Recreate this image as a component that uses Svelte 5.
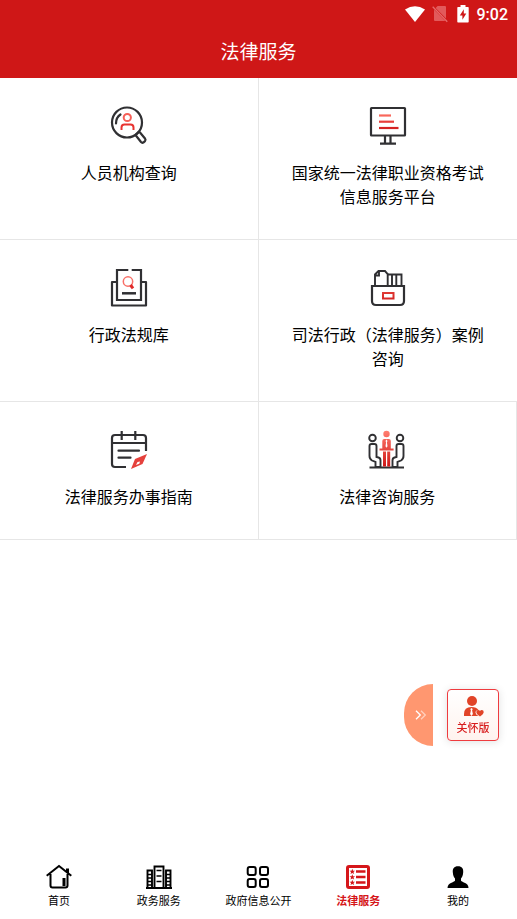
<script>
	// Entries of the service grid
	const services = [
		{ icon: "person", name: "人员机构查询" },
		{ icon: "exam", name: "国家统一法律职业资格考试信息服务平台" },
		{ icon: "law", name: "行政法规库" },
		{ icon: "cases", name: "司法行政（法律服务）案例咨询" },
		{ icon: "guide", name: "法律服务办事指南" },
		{ icon: "consult", name: "法律咨询服务" },
	];

	const tabs = [
		{ id: "home", name: "首页" },
		{ id: "affairs", name: "政务服务" },
		{ id: "open", name: "政府信息公开" },
		{ id: "legal", name: "法律服务" },
		{ id: "mine", name: "我的" },
	];

	let activeTab = $state("legal");
	let showCare = $state(true);
</script>

<div class="page">
	<header>
		<div class="status">
			<svg width="20" height="16" viewBox="0 0 20 16">
				<path d="M10 16 0 3.5Q10-3.2 20 3.5Z" fill="#fff" />
			</svg>
			<svg class="sim" width="16" height="18" viewBox="0 0 16 18">
				<path d="M5.6 1H13q1 0 1 1v11.4L3.6 3ZM2 4.6 13.4 16H3q-1 0-1-1Z" fill="#e25a5b" />
				<path d="m.7 1.7 14.6 15" stroke="#e66a6b" stroke-width="1.3" />
			</svg>
			<svg class="battery" width="12" height="18" viewBox="0 0 12 18">
				<path d="M3.5 0h5v2H11q.7 0 .7.7v14q0 .8-.7.8H1q-.7 0-.7-.8v-14Q.3 2 1 2h2.500Z" fill="#fff" />
				<path d="M6.8 4.300 2.800 10.500h2.600v4.300l3.900-6.300H6.800Z" fill="#cf1717" />
			</svg>
			<span>9:02</span>
		</div>
		<h1>法律服务</h1>
	</header>

	<main>
		{#each services as service}
			<button class="service">
				<svg class="serviceIcon" viewBox="0 0 40 40" fill="none" stroke="#303033" stroke-width="2.2">
					<defs>
						<linearGradient id="red-{service.icon}" gradientUnits="userSpaceOnUse" x1="18" y1="2" x2="22" y2="36">
							<stop offset="0" stop-color="#ff7c6e" />
							<stop offset="1" stop-color="#cf1717" />
						</linearGradient>
					</defs>
					{#if service.icon === "person"}
						<circle cx="18" cy="16.500" r="15" />
						<path d="M7 17.500q0-6 4.500-9" stroke-linecap="round" />
						<path d="m26.500 29 2.500-2.500q1-1 2 0l5 6q1 1.300 0 2.600l-1.400 1.200q-1.400 1-2.600-.3Z" stroke-linejoin="round" />
						<circle cx="18.300" cy="11.500" r="3.600" stroke="#f65f57" stroke-width="2" />
						<path d="M12.500 24v-2.500q0-3 3-3h6q3 0 3 3V24" stroke="#e8322f" stroke-width="2" />
					{:else if service.icon === "exam"}
						<rect x="3" y="2" width="34" height="27.500" rx=".5" />
						<path d="M17 30v7M22.500 30v7M12 37.700h16" />
						<path d="M11 9.500h12" stroke="#f9675b" />
						<path d="M11 15.700h15" stroke="#e83d3a" />
						<path d="M11 22h19.500" stroke="#d52222" />
					{:else if service.icon === "law"}
						<path d="M19.300 2H8v30h24V2h-9.300" />
						<path d="M7 14H3v23.500h34V14h-4" stroke-linejoin="round" />
						<path d="M13 25.300h14" stroke-width="2.500" />
						<circle cx="19" cy="13.500" r="4.700" stroke="#f87068" stroke-width="1.500" />
						<path d="m21.500 17 2.500 3.300" stroke="#e02a2a" stroke-width="3" />
					{:else if service.icon === "cases"}
						<path d="M4 18h32v15q0 4-4 4H8q-4 0-4-4Z" />
						<path d="M7 17.500V6.500L10.500 3H17l2.700 3V18M7 7.500h4V3" stroke-width="1.900" />
						<path d="M19.700 6.500h13.800V18M24 6.500V18M28.300 6.500V18" stroke-width="1.900" />
						<rect x="15" y="25" width="10.500" height="5.500" stroke="url(#red-cases)" stroke-width="2" />
					{:else if service.icon === "guide"}
						<path d="M17 37H6q-3 0-3-3V8q0-3 3-3h28q3 0 3 3v13" />
						<path d="M3 13h34M12.700 1v9M26.300 1v9" />
						<path d="M9.500 20.700H30M9.500 27.700h12" stroke-linecap="round" />
						<path d="M38 24 26 29 22 39l11.500-5Z" fill="#e5413c" stroke="none" />
						<path d="m27 35 1.500-3 2.500-.5-.7 2.300Z" fill="#fff" stroke="none" />
					{:else}
						<g stroke-width="1.900">
							<circle cx="5.500" cy="8" r="3.300" />
							<circle cx="33" cy="8" r="3.300" />
							<path d="M4.500 14h3q2 0 2 2v11l2 .5q2 .5 2 3V37h-5v-5L5 30.500Q2.500 29 2.500 26V16q0-2 2-2Z" />
							<path d="M34.500 14h-3q-2 0-2 2v11l-2 .5q-2 .5-2 3V37h5v-5l3.500-1.500q2.500-1.500 2.500-4.500V16q0-2-2-2Z" />
							<path d="M2.500 37.500H37" stroke-width="2" />
						</g>
						<g fill="url(#red-consult)" stroke="none">
							<circle cx="19.500" cy="4" r="3.200" />
							<path d="M17.300 9h4.500q2 0 2 2v7.500h2.800v2H12.500v-2h2.800V11q0-2 2-2ZM16 21.500h3v15h-3ZM20.200 21.500h3v15h-3Z" />
						</g>
						<path d="m19.500 9.500-1 1.500.6 1.300-.6 4 1 1.500 1-1.500-.6-4 .6-1.300Z" fill="#fff" stroke="none" />
					{/if}
				</svg>
				<span>{service.name}</span>
			</button>
		{/each}
	</main>

	<nav>
		{#each tabs as tab}
			<button class="tab" class:active={activeTab === tab.id} onclick={() => (activeTab = tab.id)}>
				<svg width="26" height="26" viewBox="0 0 26 26" fill="none" stroke="currentColor" stroke-width="2">
					{#if tab.id === "home"}
						<path d="M.7 11.700 13 2l12.300 9.700M4.500 10v11.500q0 2 2 2h13q2 0 2-2V10" />
						<path d="M21.500 9V4.500M18 14v8" stroke-width="3" />
					{:else if tab.id === "affairs"}
						<path d="M0 24h26" />
						<path d="M8.500 24V2.500h9V24M1.500 24V6.500H6V24M20 24V6.500h4.500V24" stroke-width="1.900" />
						<path d="M10.500 6.500h5M10.500 12h5M10.500 17.500h5M2 10.500h4M2 14h4M2 17.500h4M2 21h4M20 10.500h4M20 14h4M20 17.500h4M20 21h4" stroke-width="1.500" />
					{:else if tab.id === "open"}
						<rect x="2.700" y="3" width="8" height="8" rx="2" />
						<rect x="15" y="3" width="8" height="8" rx="2" />
						<rect x="2.700" y="15" width="8" height="8" rx="2" />
						<rect x="15" y="15" width="8" height="8" rx="2" />
					{:else if tab.id === "legal"}
						<rect x="2.500" y="2.500" width="21" height="21" rx="1.500" stroke-width="3" />
						<path d="M11 7.500h9.500M11 13h9.500M11 18.500h9.500" stroke-width="2.400" />
						{#each [7.5, 13, 18.5] as y}
							<path d="M7.300 {y - 2.7}l.8 1.900 2 .1-1.600 1.300.6 2-1.800-1.100-1.800 1.100.6-2-1.600-1.300 2-.1Z" fill="currentColor" stroke="none" />
						{/each}
					{:else}
						<path d="M13 2.300c4 0 5.500 2.500 5.200 6-.2 3.500-1.200 5-2.200 6.200v2.300c1 1.700 7.500 2 7.500 7.200h-21c0-5.200 6.500-5.500 7.500-7.200v-2.300C9 13.300 8 11.800 7.800 8.300c-.3-3.500 1.200-6 5.200-6Z" fill="currentColor" stroke="none" />
					{/if}
				</svg>
				<span>{tab.name}</span>
			</button>
		{/each}
	</nav>
</div>

<!-- Floating switch to the care edition -->
<div class="float">
	<button class="fold" aria-label="收起" onclick={() => (showCare = !showCare)}>
		<svg width="12" height="10" viewBox="0 0 12 10" fill="none" stroke-width="1.300">
			<path d="m1 .8 4.300 4.200L1 9.200" stroke="#fff" />
			<path d="m6 .8 4.300 4.200L6 9.200" stroke="#ffd0bd" />
		</svg>
	</button>
	{#if showCare}
		<button class="care">
			<svg width="22" height="22" viewBox="-2 0 22 22">
				<circle cx="8" cy="6" r="5" fill="#e14428" />
				<path d="M0 21v-2q0-7 7.500-7 5 0 7 3-3 0-3 2.500 0 2 3 3.500Z" fill="#e14428" />
				<path d="m7.500 13 1.200 1-.6 1.500.8 3.500-1.400 2-1.400-2 .8-3.500-.6-1.500Z" fill="#fff" />
				<path d="M16 21.500q-3.700-2.500-3.700-4.500 0-2 1.900-2 1.200 0 1.800 1 .6-1 1.800-1 1.900 0 1.900 2 0 2-3.700 4.500Z" fill="#e14428" />
			</svg>
			<span>关怀版</span>
		</button>
	{/if}
</div>

<style>
	:global(body) {
		background: #fff;
	}

	button {
		margin: 0;
		padding: 0;
		border: none;
		background: none;
		font-family: inherit;
		color: inherit;
		cursor: pointer;
	}

	svg {
		display: block;
	}

	.page,
	.float {
		font-family: "Noto Sans CJK SC", sans-serif;
		color: #000;
	}

	.page {
		display: flex;
		flex-direction: column;
		min-height: 100vh;
	}

	header {
		background: #cf1717;
		color: #fff;
	}

	.status {
		display: flex;
		align-items: center;
		justify-content: flex-end;
		height: 28px;
		padding-right: 9px;
		font-family: Roboto, sans-serif;
		font-size: 16px;
		font-weight: 500;
	}

	.sim {
		margin: 0 9px 0 7px;
	}

	.battery {
		margin-right: 8px;
	}

	h1 {
		margin: 0;
		padding-bottom: 4px;
		font-size: 19px;
		font-weight: 400;
		line-height: 46px;
		text-align: center;
	}

	main {
		display: grid;
		grid-template-columns: 1fr 1fr;
	}

	.service {
		display: flex;
		flex-direction: column;
		align-items: center;
		gap: 14px;
		padding: 28px 32px 31px;
		border-bottom: 1px solid #e6e6e6;
		font-size: 16px;
		line-height: 24px;
	}

	.service:nth-child(odd),
	.service:last-child {
		border-right: 1px solid #e6e6e6;
	}

	.serviceIcon {
		width: 40px;
		height: 40px;
	}

	nav {
		display: flex;
		margin-top: auto;
		padding: 0 9px 9px;
	}

	.tab {
		display: flex;
		flex: 1;
		flex-direction: column;
		align-items: center;
		font-size: 11px;
		line-height: 20px;
		white-space: nowrap;
	}

	.tab.active {
		color: #d5161a;
		font-weight: 700;
	}

	.float {
		position: fixed;
		right: 18px;
		bottom: 173px;
		display: flex;
		align-items: center;
		gap: 14px;
	}

	.fold {
		display: flex;
		align-items: center;
		justify-content: center;
		width: 29px;
		height: 62px;
		padding-left: 4px;
		border-radius: 31px 0 0 31px;
		background: #ff9770;
	}

	.care {
		display: flex;
		flex-direction: column;
		align-items: center;
		box-sizing: border-box;
		width: 52px;
		height: 52px;
		padding-top: 5px;
		border: 1px solid #ef3b3f;
		border-radius: 4px;
		background: linear-gradient(#fff, #fff3ee);
		box-shadow: 0 1px 8px rgba(0, 0, 0, 0.12);
		color: #d81e1e;
		font-size: 11px;
		font-weight: 500;
		line-height: 20px;
	}
</style>
